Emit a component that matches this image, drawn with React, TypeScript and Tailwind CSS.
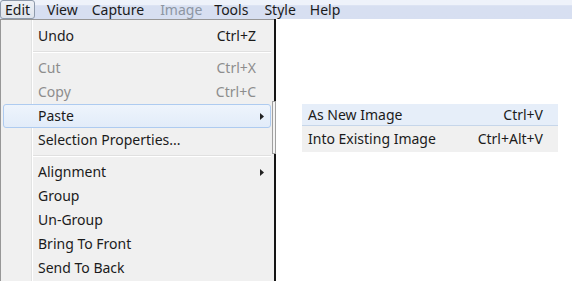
import React from "react";

const font = { fontFamily: '"Noto Sans", "Open Sans", sans-serif' };

type Item =
  | { type: "sep" }
  | { type: "item"; label: string; shortcut?: string; disabled?: boolean; arrow?: boolean; active?: boolean };

const items: Item[] = [
  { type: "item", label: "Undo", shortcut: "Ctrl+Z" },
  { type: "sep" },
  { type: "item", label: "Cut", shortcut: "Ctrl+X", disabled: true },
  { type: "item", label: "Copy", shortcut: "Ctrl+C", disabled: true },
  { type: "item", label: "Paste", arrow: true, active: true },
  { type: "item", label: "Selection Properties..." },
  { type: "sep" },
  { type: "item", label: "Alignment", arrow: true },
  { type: "item", label: "Group" },
  { type: "item", label: "Un-Group" },
  { type: "item", label: "Bring To Front" },
  { type: "item", label: "Send To Back" },
];

function Arrow() {
  return (
    <svg width="4" height="7" viewBox="0 0 4 7" className="block">
      <path d="M0 0 L4 3.5 L0 7 Z" fill="#222" />
    </svg>
  );
}

const barItems = [
  { label: "View", cls: "ml-[12px]" },
  { label: "Capture", cls: "ml-[14px]" },
  { label: "Image", cls: "ml-[16px] text-[#8d96a3]" },
  { label: "Tools", cls: "ml-[12px]" },
  { label: "Style", cls: "ml-[16px]" },
  { label: "Help", cls: "ml-[14px]" },
];

export default function App() {
  return (
    <div className="relative w-[572px] h-[281px] bg-white overflow-hidden text-[14px] text-[#1b1b1b]" style={font}>
      {/* menu bar */}
      <div className="flex items-stretch h-[19px] bg-gradient-to-b from-[#eef2fa] from-[25%] to-[#d7dff1] to-[30%]">
        <div className="flex items-center h-[19px] px-[4px] border border-[#8e9aab] rounded-[3px] bg-gradient-to-b from-[#eef1f6] to-[#dfe4ec] leading-none">
          Edit
        </div>
        {barItems.map((b) => (
          <div key={b.label} className={`flex items-center leading-none ${b.cls}`}>
            {b.label}
          </div>
        ))}
      </div>

      {/* dropdown */}
      <div className="absolute left-0 top-[19px] w-[277px] h-[270px] flex">
        <div className="relative w-[274px] h-full bg-[#f0f0f0] border-l border-t border-[#979797] pt-[4px]">
          {/* gutter separator */}
          <div className="absolute left-[30px] top-0 bottom-0 w-[2px] flex">
            <div className="w-[1px] bg-[#e2e3e3]" />
            <div className="w-[1px] bg-white" />
          </div>
          {items.map((it, i) =>
            it.type === "sep" ? (
              <div key={i} className="h-[8px] flex items-center pl-[31px] pr-[3px]">
                <div className="w-full">
                  <div className="h-[1px] bg-[#e0e0e0]" />
                  <div className="h-[1px] bg-white" />
                </div>
              </div>
            ) : (
              <div
                key={i}
                className={`relative flex items-center h-[24px] ml-[2px] mr-[3px] pl-[34px] pr-[14px] rounded-[3px] border ${
                  it.active
                    ? "border-[#aecbf0] bg-gradient-to-b from-[#eef4fc] to-[#e2ecf9]"
                    : "border-transparent"
                } ${it.disabled ? "text-[#8d8d8d]" : ""}`}
              >
                <span className="flex-1 leading-none">{it.label}</span>
                {it.shortcut && <span className="leading-none">{it.shortcut}</span>}
                {it.arrow && (
                  <span className="absolute right-[6px] top-[8px]">
                    <Arrow />
                  </span>
                )}
              </div>
            )
          )}
          {/* submenu edge bracket */}
          <div className="absolute right-[-2px] top-[81px] w-[4px] h-[53px] border border-[#a0a0a0] bg-[#f4f4f4]" />
        </div>
        <div className="w-[2px] h-full bg-[#151515]" />
      </div>

      {/* submenu */}
      <div className="absolute left-[302px] top-[104px] w-[256px] h-[48px] bg-[#f0f0f0]">
        <div className="flex items-center h-[22px] pl-[6px] pr-[15px] bg-[#e6eef9] border-b border-[#c6d6ea]">
          <span className="flex-1 leading-none">As New Image</span>
          <span className="leading-none">Ctrl+V</span>
        </div>
        <div className="flex items-center h-[25px] pl-[6px] pr-[15px]">
          <span className="flex-1 leading-none">Into Existing Image</span>
          <span className="leading-none">Ctrl+Alt+V</span>
        </div>
      </div>
    </div>
  );
}
